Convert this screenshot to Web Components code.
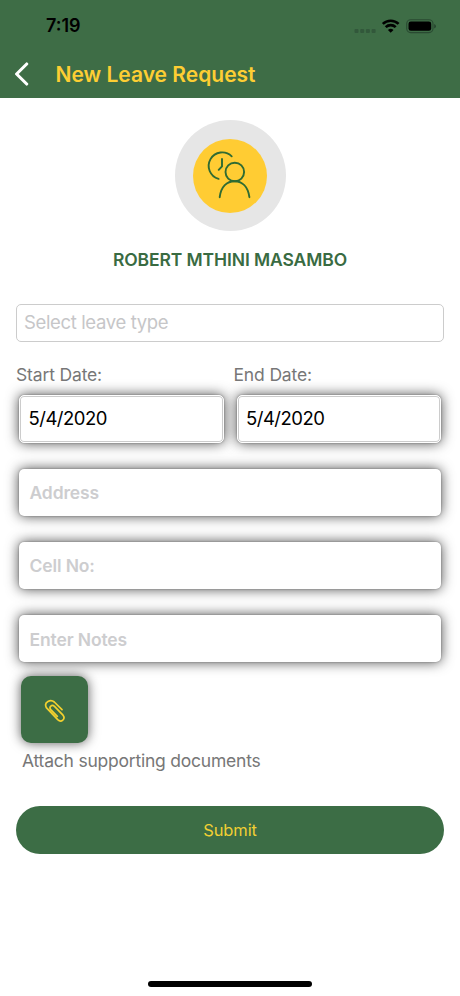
<!DOCTYPE html>
<html lang="en">
<head>
<meta charset="utf-8">
<title>New Leave Request</title>
<style>
html, body { margin: 0; height: 100%; background: #fff; }
body { font-family: Inter, "Liberation Sans", sans-serif; }
</style>
</head>
<body>
<leave-screen></leave-screen>
<script>
const define = (name, html) => customElements.define(name, class extends HTMLElement {
  constructor() {
    super();
    const t = document.createElement('template');
    t.innerHTML = html;
    this.attachShadow({ mode: 'open' }).append(t.content.cloneNode(true));
  }
});

define('status-bar', `
<style>
:host { display: flex; align-items: center; height: 50px; box-sizing: border-box; padding: 2px 23px 0 46px; color: #000; }
time { flex: 1; font-size: 18px; font-weight: 600; line-height: 22px; letter-spacing: 0; }
svg { display: block; }
</style>
<time>7:19</time>
<svg width="84" height="18" viewBox="353 16 84 18">
  <g fill="#32583b"><rect x="354.5" y="28" width="4" height="4" rx="1"/><rect x="360.2" y="28" width="4" height="4" rx="1"/><rect x="365.9" y="28" width="4" height="4" rx="1"/><rect x="371.6" y="28" width="4" height="4" rx="1"/></g>
  <g fill="none" stroke="#000" stroke-width="2.6"><path d="M382.8 22.9 A11.3 11.3 0 0 1 398.6 22.9"/><path d="M385.7 26.2 A7.1 7.1 0 0 1 395.7 26.2"/></g>
  <path d="M387.9 28.9 Q390.7 26.6 393.5 28.9 L390.7 31.8 Z"/>
  <rect x="406.7" y="18.7" width="26.3" height="12.9" rx="4" fill="none" stroke="#2a4a32" stroke-width="1.1"/>
  <rect x="408.5" y="20.5" width="22.7" height="9.3" rx="2.3"/>
  <path d="M434.2 23 Q436 23.7 436 25.2 Q436 26.7 434.2 27.4 Z" fill="#26452e"/>
</svg>`);

define('title-bar', `
<style>
:host { display: flex; align-items: center; height: 48px; padding-left: 14px; }
svg { display: block; margin-right: 26.5px; }
h1 { margin: 1px 0 0; font-size: 21px; line-height: 26px; font-weight: 600; color: #fdce33; white-space: nowrap; }
</style>
<svg width="15" height="24" viewBox="0 0 15 24"><path d="M12.7 2 L2.6 12 L12.7 22" fill="none" stroke="#fff" stroke-width="3.1" stroke-linecap="round" stroke-linejoin="round"/></svg>
<h1><slot></slot></h1>`);

define('leave-badge', `
<style>
:host { display: grid; place-items: center; width: 111px; height: 111px; border-radius: 50%; background: #e6e6e6; margin: 22px auto 0; }
div { width: 74px; height: 74px; border-radius: 50%; background: #ffcc33; }
svg { display: block; }
</style>
<div><svg width="74" height="74" viewBox="193 139 74 74" fill="none" stroke="#2f6b33" stroke-width="1.9" stroke-linecap="round">
  <path d="M231.7 156.3 A13.5 13.5 0 1 0 218.6 178.9"/>
  <path d="M222 159 V166.3 L218.7 169.8"/>
  <circle cx="234.8" cy="172" r="9.3"/>
  <path d="M219.7 197.2 C221 186.5 227 181.2 234.5 181.2 S248 186.5 249.4 197.2"/>
</svg></div>`);

define('text-label', `
<style>
:host { display: block; font-size: 17.5px; line-height: 22px; letter-spacing: -0.15px; color: #777; white-space: nowrap; }
:host([kind=name]) { font-weight: 600; letter-spacing: -0.1px; color: #396b42; text-align: center; }
</style><slot></slot>`);

define('select-box', `
<style>
:host { display: flex; align-items: center; box-sizing: border-box; height: 38px; padding: 0 7px 2px; border: 1px solid #ccc; border-radius: 5px; color: #c6c6c8; font-size: 18.5px; letter-spacing: -0.36px; }
</style><span><slot></slot></span>`);

define('input-box', `
<style>
:host { display: flex; align-items: center; box-sizing: border-box; height: 47px; padding: 1px 10.5px 0; border-radius: 5px; background: #fff; color: #cdcdcf; font-size: 17.5px; font-weight: 600; letter-spacing: -0.13px; box-shadow: 0 0 13px rgba(0,0,0,.72), 0 0 2px rgba(0,0,0,.35); white-space: nowrap; }
:host([kind=date]) { height: 47.5px; padding: 0 8.5px 2px; border: 1.5px solid #fff; font-size: 18.5px; font-weight: 400; letter-spacing: -0.5px; color: #000; box-shadow: inset 0 0 0 1px #ccc, 0 0 13px rgba(0,0,0,.72), 0 0 2px rgba(0,0,0,.35); }
</style><span><slot></slot></span>`);

define('attach-button', `
<style>
:host { display: grid; place-items: center; width: 67px; height: 67px; border-radius: 10px; background: #3c6d45; box-shadow: 0 0 12px rgba(0,0,0,.65); }
svg { display: block; }
</style>
<svg width="24" height="24" viewBox="42.700 698.200 24 24" fill="none" stroke="#f2d02f" stroke-width="1.7" stroke-linecap="round" stroke-linejoin="round">
  <path d="M61.7 709.8 L54 702.2 C50.5 699 43.2 702 46 707.8 L57.4 719.9 C61 723.2 65.6 719.2 62.7 715.4 L54.2 706.5 C51.5 704.2 48.3 707 50.5 709.8 L57 716.6"/>
</svg>`);

define('submit-button', `
<style>
:host { display: flex; align-items: center; justify-content: center; height: 48.5px; border-radius: 25px; background: #3c6d45; color: #f0cf33; font-size: 16.5px; letter-spacing: -0.1px; }
</style><span><slot></slot></span>`);

define('leave-screen', `
<style>
:host { display: flex; flex-direction: column; width: 460px; height: 996px; background: #fff; overflow: hidden; }
header { height: 98px; background: #3e6d46; }
main { display: flex; flex-direction: column; flex: 1; padding: 0 16px; }
.name { margin-top: 18px; }
select-box { margin-top: 33px; }
.dates { display: grid; grid-template-columns: 217.5px 1fr; margin-top: 22px; }
.dates input-box { margin: 9px 0 0 3px; width: 204.5px; }
.fields { display: grid; gap: 26.25px; margin: 26px 3px 0; }
attach-button { margin: 14px 0 0 5px; }
.hint { margin: 7px 0 0 6px; letter-spacing: -0.22px; }
submit-button { margin-top: 33.5px; }
footer { display: flex; justify-content: center; padding-bottom: 9px; }
footer i { width: 164px; height: 6px; border-radius: 3px; background: #000; }
</style>
<header><status-bar></status-bar><title-bar>New Leave Request</title-bar></header>
<main>
  <leave-badge></leave-badge>
  <text-label class="name" kind="name">ROBERT MTHINI MASAMBO</text-label>
  <select-box>Select leave type</select-box>
  <section class="dates">
    <div><text-label>Start Date:</text-label><input-box kind="date">5/4/2020</input-box></div>
    <div><text-label>End Date:</text-label><input-box kind="date">5/4/2020</input-box></div>
  </section>
  <section class="fields"><input-box>Address</input-box><input-box>Cell No:</input-box><input-box>Enter Notes</input-box></section>
  <attach-button></attach-button>
  <text-label class="hint">Attach supporting documents</text-label>
  <submit-button>Submit</submit-button>
</main>
<footer><i></i></footer>`);
</script>
</body>
</html>
